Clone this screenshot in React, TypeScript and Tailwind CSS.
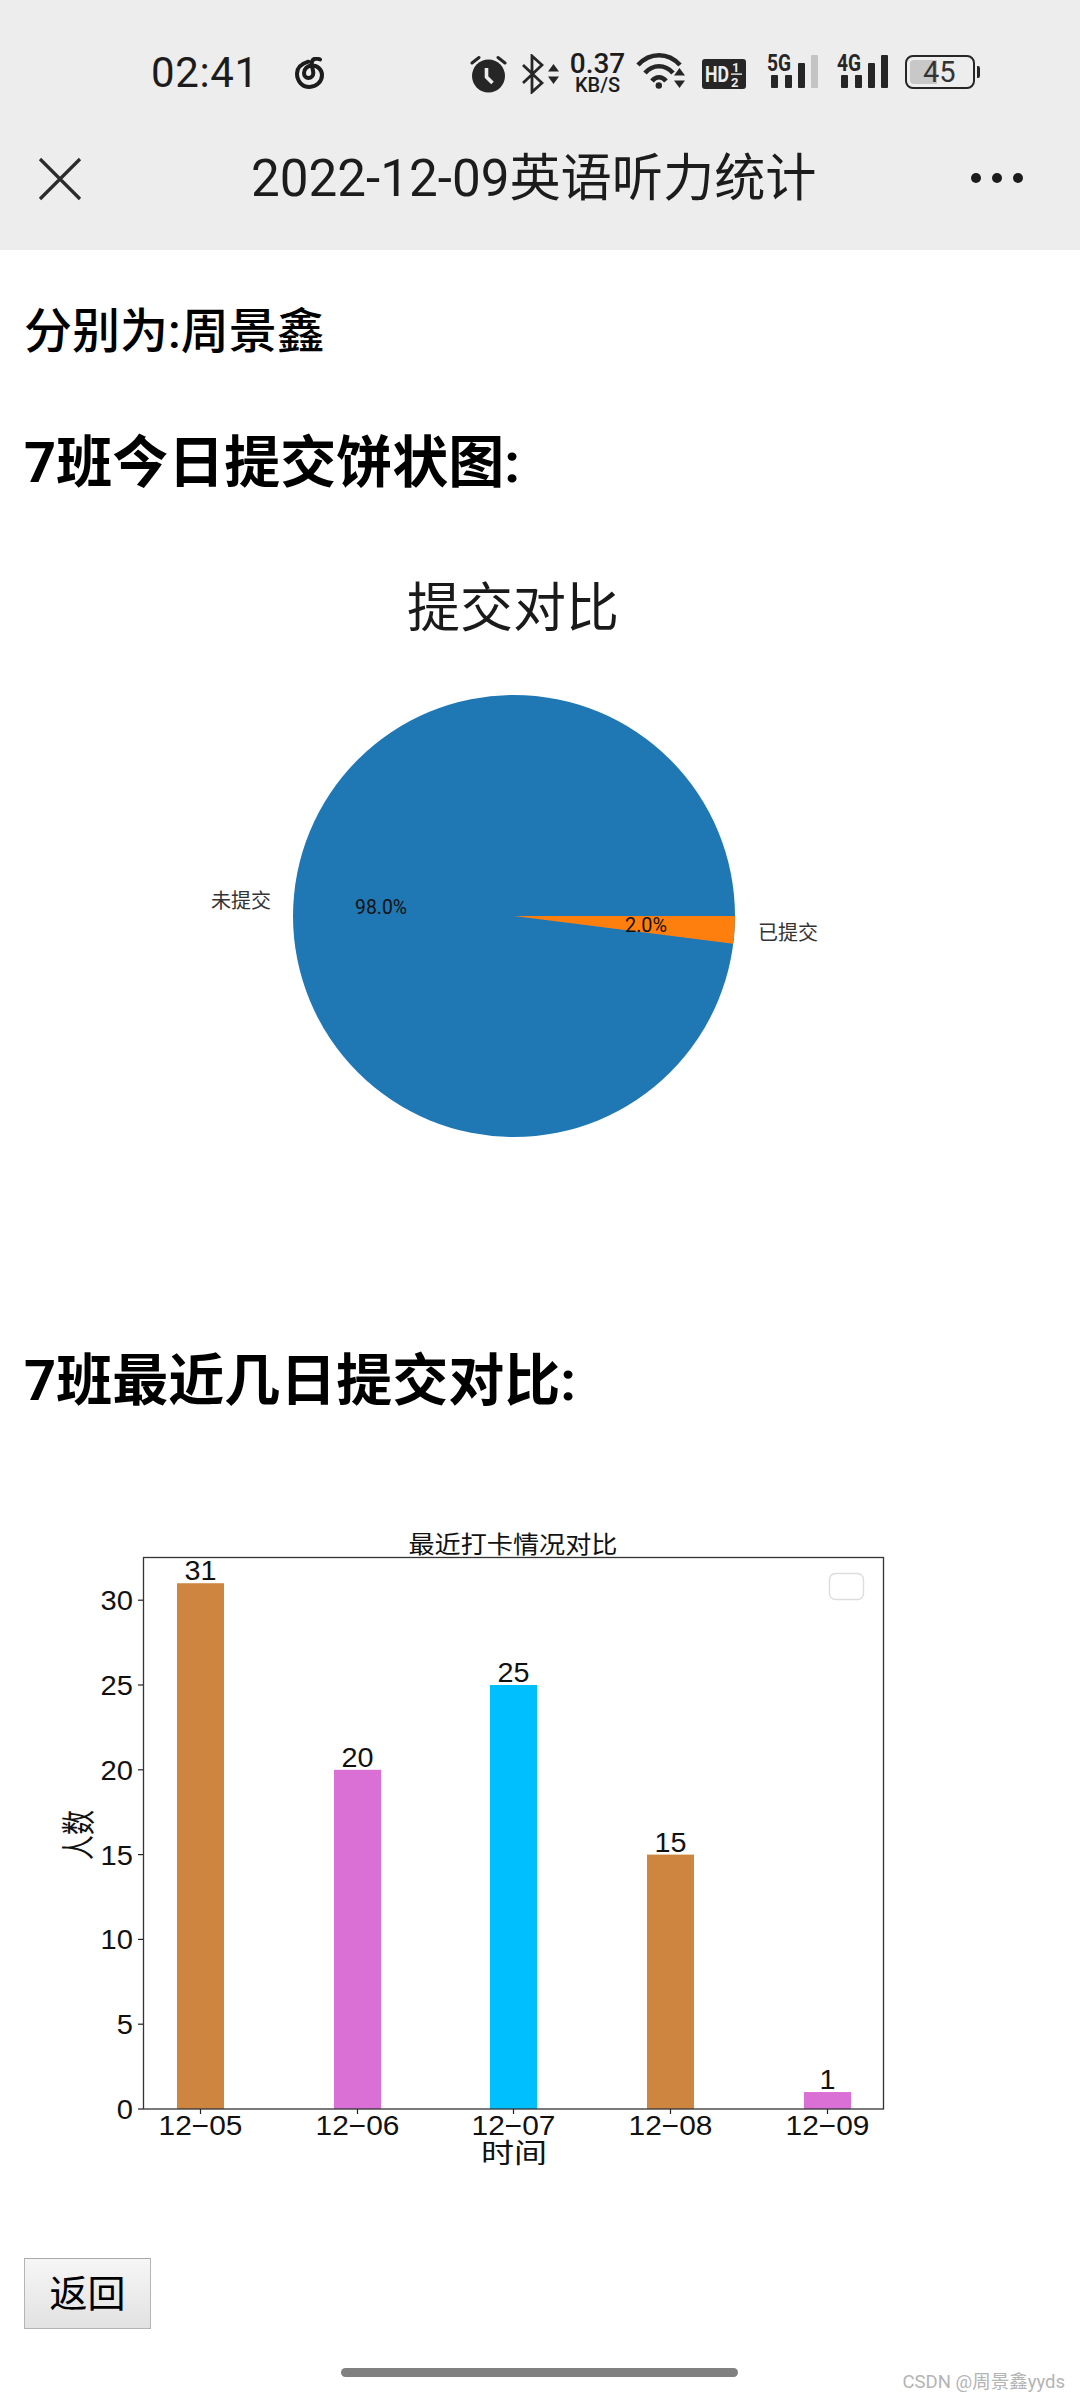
import React from "react";

const FONT = "font-['Roboto','Noto_Sans_CJK_SC',sans-serif]";

function Arrows({ w = 13, h = 24 }: { w?: number; h?: number }) {
  return (
    <svg width={w} height={h} viewBox="0 0 13 24" className="fill-[#262626]">
      <path d="M6.5 2 L12 9.5 H1 Z" />
      <path d="M6.5 22 L12 14.5 H1 Z" />
    </svg>
  );
}

function SignalGlyph({ label, last }: { label: string; last: string }) {
  const bars: [number, number, number][] = [
    [4, 75, 13],
    [18, 75, 13],
    [31, 63, 25],
  ];
  return (
    <svg width="54" height="44" viewBox="764 46 54 44">
      <text x="766" y="71" fontSize="23" fontWeight="700" fill="#262626" textLength="24" lengthAdjust="spacingAndGlyphs">
        {label}
      </text>
      {bars.map(([x, y, h]) => (
        <rect key={x} x={766 + x} y={y} width="7" height={h} rx="1" fill="#262626" />
      ))}
      <rect x="810" y="55" width="7" height="33" rx="1" fill={last} />
    </svg>
  );
}

function StatusBar() {
  return (
    <div className="flex h-[90px] items-start pt-[53px] text-[#1c1c1c]">
      <span className="ml-[151px] mt-[1px] w-[106px] whitespace-nowrap text-[42px] leading-[38px] tracking-[0.6px]">02:41</span>
      {/* cloud music */}
      <svg width="34" height="34" viewBox="0 0 34 34" fill="none" stroke="#1c1c1c" strokeWidth="4" strokeLinecap="round" className="ml-[38px] mt-[4px]">
        <path d="M13.3 4.7 C6 7 2 11 2 16.5 C2 24 7 30 14.5 30 C21.5 30 27 24.5 27 18 C27 12.5 22.5 8.5 17 8.5 C12.5 8.5 9 12 9 16 C9 19 11 21 13.5 21 C16 21 18.3 19 18.3 16 C18.3 13 16.5 10 16.7 6.5 C16.8 3 19 1.6 22 1.6 L25 2.4" />
      </svg>
      {/* alarm */}
      <svg width="37" height="38" viewBox="0 0 37 38" className="ml-[141px] mt-[2px]">
        <circle cx="18.5" cy="21" r="16.5" fill="#262626" />
        <path d="M2 8 L9 2.5 M35 8 L28 2.5" stroke="#262626" strokeWidth="3" strokeLinecap="round" />
        <path d="M16.5 13 V22 L22.5 28" fill="none" stroke="#ededed" strokeWidth="3.6" />
      </svg>
      {/* bluetooth */}
      <svg width="22" height="40" viewBox="0 0 22 40" fill="none" stroke="#262626" strokeWidth="2.8" className="ml-[15px] mt-[1px]">
        <path d="M1 11 L20 29 L10 38 V2 L20 11 L1 29" />
      </svg>
      <div className="ml-[3px] mt-[9px]">
        <Arrows />
      </div>
      <div className="ml-[10px] flex w-[55px] flex-col items-center">
        <span className="mt-[-2px] text-[28px] font-medium leading-[25px] text-[#1c1c1c]">0.37</span>
        <span className="mt-[1px] text-[20px] font-medium leading-[16px] text-[#1c1c1c]">KB/S</span>
      </div>
      {/* wifi */}
      <svg width="50" height="38" viewBox="0 0 50 38" fill="none" stroke="#262626" strokeWidth="4.6" className="ml-[11px] mt-[-1px]">
        <path d="M2 13 C14 0 32 0 44 13" />
        <path d="M9 21 C17 12 29 12 37 21" />
        <path d="M16 29 C20 24 26 24 30 29" />
        <circle cx="22.8" cy="33.5" r="3.2" fill="#262626" stroke="none" />
      </svg>
      <div className="ml-[-13px] mt-[13px]">
        <Arrows />
      </div>
      {/* HD */}
      <svg width="44" height="30" viewBox="0 0 44 30" className="ml-[16px] mt-[6px]">
        <rect width="44" height="30" rx="3" fill="#262626" />
        <text x="3" y="23" fontSize="22" fontWeight="700" fill="#ededed" textLength="24" lengthAdjust="spacingAndGlyphs">HD</text>
        <text x="30" y="13" fontSize="13" fontWeight="700" fill="#ededed">1</text>
        <rect x="29" y="14.4" width="11" height="1.4" fill="#ededed" />
        <text x="29" y="27.5" fontSize="13" fontWeight="700" fill="#ededed">2</text>
      </svg>
      <div className="ml-[19px] mt-[-7px]">
        <SignalGlyph label="5G" last="#c4c4c4" />
      </div>
      <div className="ml-[16px] mt-[-7px]">
        <SignalGlyph label="4G" last="#262626" />
      </div>
      {/* battery */}
      <div className="relative ml-[16px] mt-[2px] h-[34px] w-[70px] rounded-[8px] border-[2px] border-[#262626] p-[3px]">
        <div className="h-full w-[27px] rounded-l-[4px] bg-[#c8c8c8]" />
        <span className="absolute left-[16px] top-[1px] text-[29px] leading-[28px] text-[#333333]">45</span>
      </div>
      <div className="ml-[2px] mt-[13px] h-[12px] w-[3px] rounded-r-[2px] bg-[#262626]" />
    </div>
  );
}

function TitleBar() {
  return (
    <div className="relative flex h-[160px] items-start">
      <svg width="44" height="44" viewBox="0 0 44 44" fill="none" stroke="#2b2b2b" strokeWidth="3.2" className="ml-[38px] mt-[67px] shrink-0">
        <path d="M2 2 L42 42 M42 2 L2 42" />
      </svg>
      <div className="ml-[169px] mt-[56px] text-[51.2px] leading-[66px] text-[#1c1c1c] whitespace-nowrap">2022-12-09英语听力统计</div>
      <div className="absolute right-[57px] top-[83px] flex gap-[11px]">
        <span className="h-[10px] w-[10px] rounded-full bg-[#1c1c1c]" />
        <span className="h-[10px] w-[10px] rounded-full bg-[#1c1c1c]" />
        <span className="h-[10px] w-[10px] rounded-full bg-[#1c1c1c]" />
      </div>
    </div>
  );
}

function PieChart() {
  const cx = 514;
  const cy = 916;
  const r = 221;
  const a = (7.2 * Math.PI) / 180;
  const ex = cx + r * Math.cos(a);
  const ey = cy + r * Math.sin(a);
  return (
    <svg viewBox="0 495 1080 800" className="block h-[800px] w-[1080px]">
      <text x="513" y="627" fontSize="53" textAnchor="middle" fill="#1a1a1a">提交对比</text>
      <circle cx={cx} cy={cy} r={r} fill="#1f77b4" />
      <path d={`M${cx} ${cy} L${cx + r} ${cy} A${r} ${r} 0 0 1 ${ex} ${ey} Z`} fill="#ff7f0e" />
      <text x="211" y="908" fontSize="20" fill="#333333">未提交</text>
      <text x="758" y="940" fontSize="20" fill="#333333">已提交</text>
      <text x="355" y="914" fontSize="20" fill="#111111" textLength="52" lengthAdjust="spacingAndGlyphs">98.0%</text>
      <text x="625" y="932" fontSize="20" fill="#111111" textLength="42" lengthAdjust="spacingAndGlyphs">2.0%</text>
    </svg>
  );
}

const BARS = [
  { x: 177, v: 31, c: "#cd853f", l: "12−05" },
  { x: 334, v: 20, c: "#da70d6", l: "12−06" },
  { x: 490, v: 25, c: "#00bfff", l: "12−07" },
  { x: 647, v: 15, c: "#cd853f", l: "12−08" },
  { x: 804, v: 1, c: "#da70d6", l: "12−09" },
];

function BarChart() {
  const y0 = 2109;
  const unit = 16.96;
  return (
    <svg viewBox="0 1413 1080 780" className="block h-[780px] w-[1080px]">
      <text x="513" y="1553" fontSize="24" textAnchor="middle" textLength="209" lengthAdjust="spacingAndGlyphs" fill="#111111">最近打卡情况对比</text>
      {BARS.map((b) => (
        <g key={b.x}>
          <rect x={b.x} y={y0 - b.v * unit} width="47" height={b.v * unit} fill={b.c} />
          <text
            x={b.x + 23.5}
            y={y0 - b.v * unit - 3}
            fontSize="27"
            textAnchor="middle"
            textLength={String(b.v).length * 16}
            lengthAdjust="spacingAndGlyphs"
            fill="#111111"
            className="font-['Liberation_Sans']"
          >
            {b.v}
          </text>
          <line x1={b.x + 23.5} x2={b.x + 23.5} y1={y0} y2={y0 + 5} stroke="#222222" strokeWidth="1.2" />
          <text x={b.x + 23.5} y="2135" fontSize="27" textAnchor="middle" textLength="84" lengthAdjust="spacingAndGlyphs" fill="#111111" className="font-['Liberation_Sans']">
            {b.l}
          </text>
        </g>
      ))}
      <rect x="143.5" y="1557.5" width="740" height="551.5" fill="none" stroke="#333333" strokeWidth="1.3" />
      {[0, 5, 10, 15, 20, 25, 30].map((v) => (
        <g key={v}>
          <line x1="138" x2="143" y1={y0 - v * unit} y2={y0 - v * unit} stroke="#222222" strokeWidth="1.2" />
          <text
            x="133"
            y={y0 - v * unit + 10}
            fontSize="27"
            textAnchor="end"
            textLength={String(v).length * 16.2}
            lengthAdjust="spacingAndGlyphs"
            fill="#111111"
            className="font-['Liberation_Sans']"
          >
            {v}
          </text>
        </g>
      ))}
      <rect x="829.5" y="1573.5" width="34" height="26" rx="6" fill="#ffffff" stroke="#dddddd" strokeWidth="1.4" />
      <text x="514" y="2163" fontSize="27" textAnchor="middle" textLength="66" lengthAdjust="spacingAndGlyphs" fill="#111111">时间</text>
      <text transform="translate(91 1835) rotate(-90)" fontSize="34" textAnchor="middle" textLength="50" lengthAdjust="spacingAndGlyphs" fill="#111111">人数</text>
    </svg>
  );
}

export default function App() {
  return (
    <div className={`relative h-[2400px] w-[1080px] overflow-hidden bg-white text-black ${FONT}`}>
      <header className="bg-[#ededed]">
        <StatusBar />
        <TitleBar />
      </header>
      <p className="ml-6 mt-[54px] text-[48px] font-medium leading-[56px]">分别为:周景鑫</p>
      <h3 className="ml-6 mt-[71px] text-[56px] font-bold leading-[64px]">7班今日提交饼状图:</h3>
      <PieChart />
      <h3 className="ml-6 mt-[54px] text-[56px] font-bold leading-[64px]">7班最近几日提交对比:</h3>
      <BarChart />
      <button className="ml-6 mt-[65px] block h-[71px] w-[127px] border border-[#b5b5b5] border-t-[#a8a8a8] bg-gradient-to-b from-[#f6f6f6] to-[#e2e2e2] text-[38px] leading-none text-black">
        返回
      </button>
      <div className="mt-[39px] ml-[341px] h-[9px] w-[397px] rounded-full bg-[#808080]" />
      <span className="absolute bottom-[6px] right-[15px] text-[18.5px] leading-[24px] text-[#b4b4b4]">CSDN @周景鑫yyds</span>
    </div>
  );
}
